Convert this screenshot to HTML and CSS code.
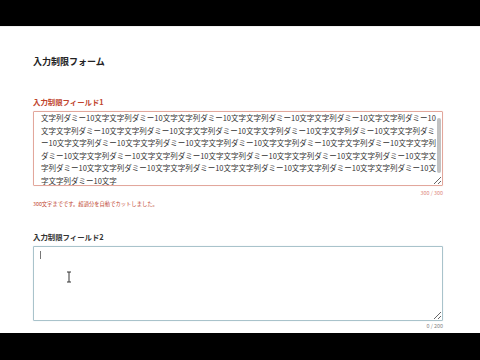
FILE: index.html
```html
<!DOCTYPE html>
<html lang="ja">
<head>
<meta charset="utf-8">
<link rel="stylesheet" href="styles.css">
</head>
<body>
<div class="bar"></div>
<main class="page">
  <h1 class="title">入力制限フォーム</h1>
  <section class="field">
    <label class="label label-error" for="f1">入力制限フィールド1</label>
    <div class="box-wrap">
      <textarea id="f1" class="box box-error">文字列ダミー10文字文字列ダミー10文字文字列ダミー10文字文字列ダミー10文字文字列ダミー10文字文字列ダミー10文字文字列ダミー10文字文字列ダミー10文字文字列ダミー10文字文字列ダミー10文字文字列ダミー10文字文字列ダミー10文字文字列ダミー10文字文字列ダミー10文字文字列ダミー10文字文字列ダミー10文字文字列ダミー10文字文字列ダミー10文字文字列ダミー10文字文字列ダミー10文字文字列ダミー10文字文字列ダミー10文字文字列ダミー10文字文字列ダミー10文字文字列ダミー10文字文字列ダミー10文字文字列ダミー10文字文字列ダミー10文字文字列ダミー10文字文字列ダミー10文字</textarea>
      <span class="thumb"></span>
    </div>
    <div class="count count-error">300 / 300</div>
    <p class="message">300文字までです。超過分を自動でカットしました。</p>
  </section>
  <section class="field field2">
    <label class="label" for="f2">入力制限フィールド2</label>
    <div class="box-wrap">
      <textarea id="f2" class="box box-focus"></textarea>
      <span class="caret"></span>
      <svg class="ibeam" width="6" height="12" viewBox="0 0 6 12"><path d="M1 1h4M3 1v10M1 11h4" stroke="#333" stroke-width="1" fill="none"/></svg>
    </div>
    <div class="count">0 / 200</div>
  </section>
</main>
<div class="bar bar-bottom"></div>
</body>
</html>
```
FILE: styles.css
```css
html, body {
  margin: 0;
  padding: 0;
  background: #000;
  width: 480px;
  height: 360px;
  overflow: hidden;
}
body {
  display: flex;
  flex-direction: column;
  font-family: "Noto Sans CJK JP", "Noto Sans", sans-serif;
}
.bar {
  height: 26px;
  flex: none;
  background: #000;
}
.bar-bottom {
  height: 27px;
}
.page {
  flex: none;
  height: 307px;
  background: #fff;
  padding: 0 37px 0 33px;
  box-sizing: border-box;
  border-top: 1px solid #f0f0f0;
}
.title {
  margin: 29px 0 0;
  font-size: 9px;
  line-height: 12px;
  font-weight: bold;
  color: #222;
}
.field {
  display: flex;
  flex-direction: column;
  margin-top: 29px;
}
.field2 {
  margin-top: 24px;
}
.label {
  font-size: 7.4px;
  line-height: 10px;
  font-weight: bold;
  color: #333;
  margin-bottom: 4px;
}
.label-error {
  color: #c0432c;
}
.box {
  display: block;
  width: 410px;
  height: 75px;
  box-sizing: border-box;
  margin: 0;
  border: 1px solid #bbb;
  border-radius: 1px;
  font-family: "Noto Sans CJK JP", "Noto Sans", sans-serif;
  font-size: 7.5px;
  line-height: 12.5px;
  color: #333;
  padding: 0 2px 12px 7px;
  outline: none;
  overflow-y: scroll;
}
.box-error {
  border-color: #e2a79c;
  box-shadow: 0 0 1px rgba(220, 120, 100, 0.3);
}
.box-focus {
  border-color: #a9c3cb;
  box-shadow: 0 0 1px rgba(120, 160, 180, 0.4);
  overflow-y: auto;
  caret-color: transparent;
}
.box::-webkit-scrollbar {
  width: 6px;
}
.box::-webkit-scrollbar-track {
  background: #fff;
}
.box::-webkit-scrollbar-thumb {
  background: transparent;
}
.thumb {
  position: absolute;
  right: 2px;
  top: 7px;
  width: 4px;
  height: 55px;
  border-radius: 2px;
  background: #c2c2c2;
}
.count {
  align-self: flex-end;
  font-size: 5.4px;
  line-height: 8px;
  color: #888;
  margin-top: 1px;
}
.count-error {
  color: #e08a80;
  margin-top: 3px;
}
.message {
  margin: 3px 0 0;
  font-size: 5.3px;
  line-height: 8px;
  color: #c0432c;
}
.box-wrap {
  position: relative;
  width: 410px;
}
.caret {
  position: absolute;
  left: 7px;
  top: 5px;
  width: 1px;
  height: 8px;
  background: #777;
}
.ibeam {
  position: absolute;
  left: 33px;
  top: 25px;
}
```
